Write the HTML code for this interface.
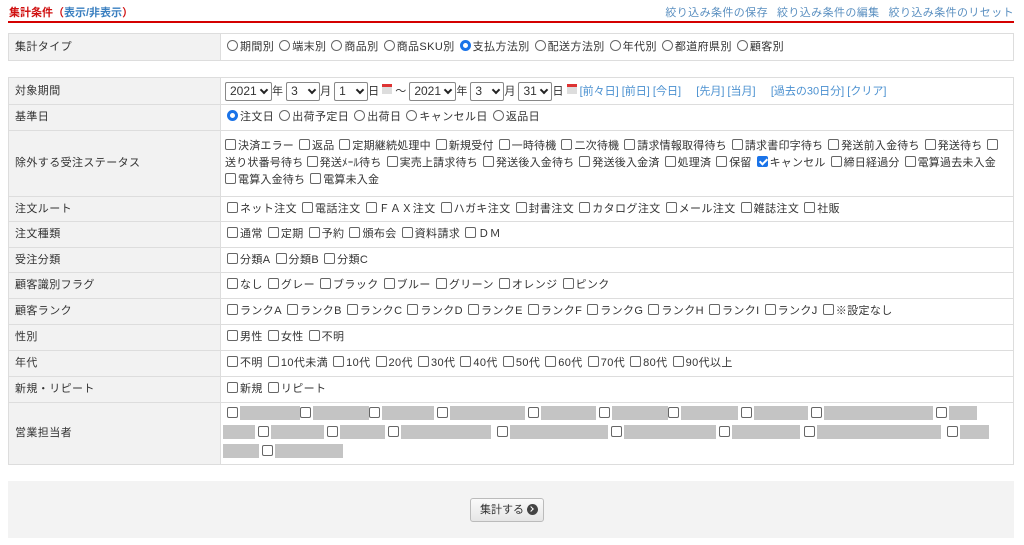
<!DOCTYPE html>
<html><head><meta charset="utf-8"><style>
*{box-sizing:border-box;margin:0;padding:0}
body{width:1024px;height:545px;background:#fff;font-family:"Liberation Sans","Noto Sans CJK JP",sans-serif;font-size:11px;letter-spacing:0.4px;color:#333;position:relative;overflow:hidden}
.hd{position:absolute;left:9px;top:4px;font-size:11px;color:#d01010;font-weight:bold;letter-spacing:0}
.hd a{color:#3a7fc0}
.rl{position:absolute;right:10px;top:4px;color:#5a8fc0;font-size:11px}
.rl span{margin-left:9px}
.red{position:absolute;left:8px;top:21px;width:1006px;height:2px;background:#d40000}
table{position:absolute;left:8px;width:1006px;border-collapse:collapse;table-layout:fixed}
td{border:1px solid #ddd;vertical-align:middle;line-height:17px}
td.l{width:212px;background:#f2f2f2;padding-left:6px}
td.r{padding:1px 4px 1px 6px;background:#fff}
.nw{white-space:nowrap;letter-spacing:0.2px}
.cb{display:inline-block;width:11px;height:11px;border:1px solid #666;border-radius:2px;vertical-align:-1px;margin-right:2px;background:#fff}
.cb.on{background:#1a73e8;border-color:#1a73e8;position:relative}
.cb.on:after{content:"";position:absolute;left:3px;top:0;width:3px;height:6px;border:solid #fff;border-width:0 2px 2px 0;transform:rotate(45deg)}
.rd{display:inline-block;width:11px;height:11px;border:1px solid #666;border-radius:50%;vertical-align:-1px;margin-right:2px}
.rd.on{border:3px solid #1a73e8;background:#fff}
.it{margin-right:5px}
.sel{display:inline-block;height:19px;border:1px solid #888;border-radius:2px;padding:0 4px;line-height:17px;font-size:12px;letter-spacing:0;vertical-align:middle;position:relative;background:#fff}
.sel:after{content:"";position:absolute;right:4px;top:4px;width:4px;height:4px;border:solid #222;border-width:0 2px 2px 0;transform:rotate(45deg)}
.cal{display:inline-block;width:10px;height:10px;background:#ddd;border-top:3px solid #d33;vertical-align:0}
.lk{color:#4a90d0}
.g{display:inline-block;height:14px;background:#c4c4c4;vertical-align:-3px}
.ft{position:absolute;left:8px;top:481px;width:1006px;height:57px;background:#f3f3f3}
.btn{position:absolute;left:470px;top:498px;width:74px;height:24px;border:1px solid #bbb;border-radius:3px;background:linear-gradient(#fafafa,#e6e6e6);font-size:11px;line-height:22px;padding-left:9px;letter-spacing:0}
.btn i{display:inline-block;width:11px;height:11px;border-radius:50%;background:#444;vertical-align:-2px;margin-left:3px;position:relative}
.btn i:after{content:"";position:absolute;left:2px;top:3px;width:3px;height:3px;border:solid #fff;border-width:1px 1px 0 0;transform:rotate(45deg)}
</style></head><body>
<div class="hd">集計条件（<a>表示/非表示</a>）</div>
<div class="rl"><span>絞り込み条件の保存</span><span>絞り込み条件の編集</span><span>絞り込み条件のリセット</span></div>
<div class="red"></div>
<table style="top:33px"><tr style="height:27px"><td class="l">集計タイプ</td><td class="r"><span class="rd"></span><span class="it">期間別</span><span class="rd"></span><span class="it">端末別</span><span class="rd"></span><span class="it">商品別</span><span class="rd"></span><span class="it">商品SKU別</span><span class="rd on"></span><span class="it">支払方法別</span><span class="rd"></span><span class="it">配送方法別</span><span class="rd"></span><span class="it">年代別</span><span class="rd"></span><span class="it">都道府県別</span><span class="rd"></span><span class="it">顧客別</span></td></tr></table>
<table style="top:77px">
<tr style="height:27px"><td class="l">対象期間</td><td class="r nw" style="padding-left:4px;letter-spacing:0"><span class="sel" style="width:47px">2021</span>年 <span class="sel" style="width:34px">3</span>月 <span class="sel" style="width:34px">1</span>日 <span class="cal"></span> ～ <span class="sel" style="width:47px">2021</span>年 <span class="sel" style="width:34px">3</span>月 <span class="sel" style="width:34px">31</span>日 <span class="cal"></span> <span class="lk">[前々日] [前日] [今日]</span>&nbsp;&nbsp;&nbsp;&nbsp; <span class="lk">[先月] [当月]</span>&nbsp;&nbsp;&nbsp;&nbsp; <span class="lk">[過去の30日分] [クリア]</span></td></tr>
<tr style="height:26px"><td class="l">基準日</td><td class="r"><span class="rd on"></span><span class="it">注文日</span><span class="rd"></span><span class="it">出荷予定日</span><span class="rd"></span><span class="it">出荷日</span><span class="rd"></span><span class="it">キャンセル日</span><span class="rd"></span><span class="it">返品日</span></td></tr>
<tr style="height:66px"><td class="l">除外する受注ステータス</td><td class="r nw" style="padding-left:4px;overflow:hidden"><span class="cb"></span><span class="it">決済エラー</span><span class="cb"></span><span class="it">返品</span><span class="cb"></span><span class="it">定期継続処理中</span><span class="cb"></span><span class="it">新規受付</span><span class="cb"></span><span class="it">一時待機</span><span class="cb"></span><span class="it">二次待機</span><span class="cb"></span><span class="it">請求情報取得待ち</span><span class="cb"></span><span class="it">請求書印字待ち</span><span class="cb"></span><span class="it">発送前入金待ち</span><span class="cb"></span><span class="it">発送待ち</span><span class="cb"></span><br>送り状番号待ち <span class="cb"></span><span class="it">発送ﾒｰﾙ待ち</span><span class="cb"></span><span class="it">実売上請求待ち</span><span class="cb"></span><span class="it">発送後入金待ち</span><span class="cb"></span><span class="it">発送後入金済</span><span class="cb"></span><span class="it">処理済</span><span class="cb"></span><span class="it">保留</span><span class="cb on"></span><span class="it">キャンセル</span><span class="cb"></span><span class="it">締日経過分</span><span class="cb"></span><span class="it">電算過去未入金</span><br><span class="cb"></span><span class="it">電算入金待ち</span><span class="cb"></span><span class="it">電算未入金</span></td></tr>
<tr style="height:25px"><td class="l">注文ルート</td><td class="r"><span class="cb"></span><span class="it">ネット注文</span><span class="cb"></span><span class="it">電話注文</span><span class="cb"></span><span class="it">ＦＡＸ注文</span><span class="cb"></span><span class="it">ハガキ注文</span><span class="cb"></span><span class="it">封書注文</span><span class="cb"></span><span class="it">カタログ注文</span><span class="cb"></span><span class="it">メール注文</span><span class="cb"></span><span class="it">雑誌注文</span><span class="cb"></span><span class="it">社販</span></td></tr>
<tr style="height:26px"><td class="l">注文種類</td><td class="r"><span class="cb"></span><span class="it">通常</span><span class="cb"></span><span class="it">定期</span><span class="cb"></span><span class="it">予約</span><span class="cb"></span><span class="it">頒布会</span><span class="cb"></span><span class="it">資料請求</span><span class="cb"></span><span class="it">ＤＭ</span></td></tr>
<tr style="height:25px"><td class="l">受注分類</td><td class="r"><span class="cb"></span><span class="it">分類A</span><span class="cb"></span><span class="it">分類B</span><span class="cb"></span><span class="it">分類C</span></td></tr>
<tr style="height:26px"><td class="l">顧客識別フラグ</td><td class="r"><span class="cb"></span><span class="it">なし</span><span class="cb"></span><span class="it">グレー</span><span class="cb"></span><span class="it">ブラック</span><span class="cb"></span><span class="it">ブルー</span><span class="cb"></span><span class="it">グリーン</span><span class="cb"></span><span class="it">オレンジ</span><span class="cb"></span><span class="it">ピンク</span></td></tr>
<tr style="height:26px"><td class="l">顧客ランク</td><td class="r"><span class="cb"></span><span class="it">ランクA</span><span class="cb"></span><span class="it">ランクB</span><span class="cb"></span><span class="it">ランクC</span><span class="cb"></span><span class="it">ランクD</span><span class="cb"></span><span class="it">ランクE</span><span class="cb"></span><span class="it">ランクF</span><span class="cb"></span><span class="it">ランクG</span><span class="cb"></span><span class="it">ランクH</span><span class="cb"></span><span class="it">ランクI</span><span class="cb"></span><span class="it">ランクJ</span><span class="cb"></span><span class="it">※設定なし</span></td></tr>
<tr style="height:26px"><td class="l">性別</td><td class="r"><span class="cb"></span><span class="it">男性</span><span class="cb"></span><span class="it">女性</span><span class="cb"></span><span class="it">不明</span></td></tr>
<tr style="height:26px"><td class="l">年代</td><td class="r"><span class="cb"></span><span class="it">不明</span><span class="cb"></span><span class="it">10代未満</span><span class="cb"></span><span class="it">10代</span><span class="cb"></span><span class="it">20代</span><span class="cb"></span><span class="it">30代</span><span class="cb"></span><span class="it">40代</span><span class="cb"></span><span class="it">50代</span><span class="cb"></span><span class="it">60代</span><span class="cb"></span><span class="it">70代</span><span class="cb"></span><span class="it">80代</span><span class="cb"></span><span class="it">90代以上</span></td></tr>
<tr style="height:26px"><td class="l">新規・リピート</td><td class="r"><span class="cb"></span><span class="it">新規</span><span class="cb"></span><span class="it">リピート</span></td></tr>
<tr style="height:62px"><td class="l">営業担当者</td><td class="r" style="padding-left:2px;line-height:19px;white-space:nowrap;letter-spacing:0;overflow:hidden"><span class="cb" style="margin-left:4px"></span><span class="g" style="width:60px"></span><span class="cb"></span><span class="g" style="width:56px"></span><span class="cb"></span><span class="g" style="width:52px"></span> <span class="cb"></span><span class="g" style="width:75px"></span> <span class="cb"></span><span class="g" style="width:55px"></span> <span class="cb"></span><span class="g" style="width:56px"></span><span class="cb"></span><span class="g" style="width:57px"></span> <span class="cb"></span><span class="g" style="width:54px"></span> <span class="cb"></span><span class="g" style="width:109px"></span> <span class="cb"></span><span class="g" style="width:28px"></span><br><span class="g" style="width:32px"></span> <span class="cb"></span><span class="g" style="width:53px"></span> <span class="cb"></span><span class="g" style="width:45px"></span> <span class="cb"></span><span class="g" style="width:90px"></span> &nbsp;<span class="cb"></span><span class="g" style="width:98px"></span> <span class="cb"></span><span class="g" style="width:92px"></span> <span class="cb"></span><span class="g" style="width:68px"></span> <span class="cb"></span><span class="g" style="width:124px"></span> &nbsp;<span class="cb"></span><span class="g" style="width:29px"></span><br><span class="g" style="width:36px"></span> <span class="cb"></span><span class="g" style="width:68px"></span></td></tr>
</table>
<div class="ft"></div>
<div class="btn">集計する<i></i></div>
</body></html>
